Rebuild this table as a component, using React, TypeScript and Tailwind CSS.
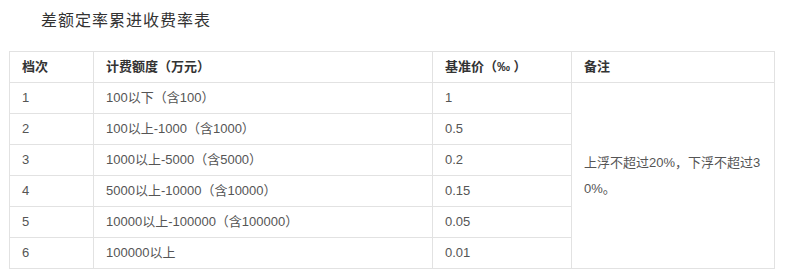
import React from "react";

const rows = [
  ["1", "100以下（含100）", "1"],
  ["2", "100以上-1000（含1000）", "0.5"],
  ["3", "1000以上-5000（含5000）", "0.2"],
  ["4", "5000以上-10000（含10000）", "0.15"],
  ["5", "10000以上-100000（含100000）", "0.05"],
  ["6", "100000以上", "0.01"],
];

export default function App() {
  const font = { fontFamily: '"Liberation Sans", "Noto Sans CJK SC", sans-serif' };
  const cell = "border border-[#e2e2e2] px-3 h-[31px] p-0 align-middle text-left";
  return (
    <div className="w-[805px] h-[276px] bg-white pl-[9px] pt-[11px]" style={font}>
      <p className="indent-[32px] text-[16px] leading-[20px] tracking-[1px] text-[#333]">差额定率累进收费率表</p>
      <table className="mt-[20px] table-fixed border-collapse w-[765px] text-[13px] text-[#555]">
        <colgroup>
          <col className="w-[84px]" />
          <col className="w-[339px]" />
          <col className="w-[139px]" />
          <col className="w-[203px]" />
        </colgroup>
        <thead>
          <tr>
            <th className={cell + " font-bold text-[#333]"}>档次</th>
            <th className={cell + " font-bold text-[#333]"}>计费额度（万元）</th>
            <th className={cell + " font-bold text-[#333]"}>基准价（‰ ）</th>
            <th className={cell + " font-bold text-[#333]"}>备注</th>
          </tr>
        </thead>
        <tbody>
          {rows.map((r, i) => (
            <tr key={i}>
              <td className={cell}>{r[0]}</td>
              <td className={cell}>{r[1]}</td>
              <td className={cell}>{r[2]}</td>
              {i === 0 && (
                <td rowSpan={6} className={cell + " leading-[26px]"}>
                  上浮不超过20%，下浮不超过3
                  <br />
                  0%。
                </td>
              )}
            </tr>
          ))}
        </tbody>
      </table>
    </div>
  );
}
